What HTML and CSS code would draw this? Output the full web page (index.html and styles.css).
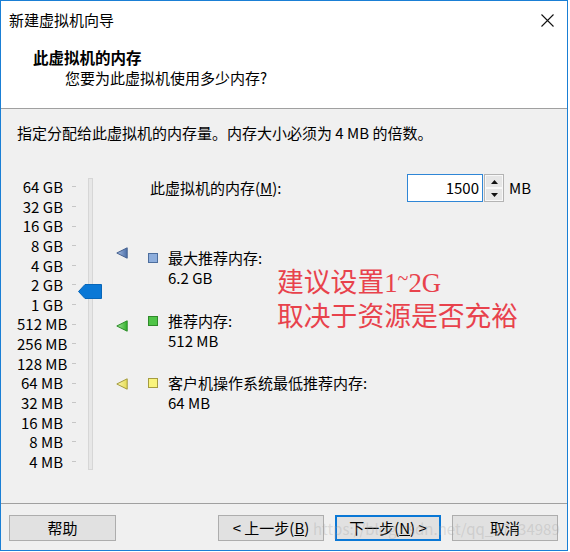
FILE: index.html
```html
<!DOCTYPE html>
<html lang="zh-CN">
<head>
<meta charset="utf-8">
<title>新建虚拟机向导</title>
<link rel="stylesheet" href="styles.css">
</head>
<body>
<div class="window">
  <div class="top">
    <div class="titlebar">
      <span class="title">新建虚拟机向导</span>
      <svg class="close" width="13" height="13" viewBox="0 0 13 13"><path d="M0.5 0.5 L12.5 12.5 M12.5 0.5 L0.5 12.5" stroke="#111" stroke-width="1.1" fill="none"/></svg>
    </div>
    <div class="header">
      <div class="h-title">此虚拟机的内存</div>
      <div class="h-sub">您要为此虚拟机使用多少内存?</div>
    </div>
  </div>
  <div class="body">
    <div class="intro">指定分配给此虚拟机的内存量。内存大小必须为 4 MB 的倍数。</div>
    <div class="main">
      <div class="scale">
        <div class="labels">
          <div class="lbl">64 GB</div><div class="lbl">32 GB</div><div class="lbl">16 GB</div><div class="lbl">8 GB</div><div class="lbl">4 GB</div><div class="lbl">2 GB</div><div class="lbl">1 GB</div><div class="lbl">512 MB</div><div class="lbl">256 MB</div><div class="lbl">128 MB</div><div class="lbl">64 MB</div><div class="lbl">32 MB</div><div class="lbl">16 MB</div><div class="lbl">8 MB</div><div class="lbl">4 MB</div>
        </div>
        <div class="ticks">
          <div class="tick"></div><div class="tick"></div><div class="tick"></div><div class="tick"></div><div class="tick"></div><div class="tick"></div><div class="tick"></div><div class="tick"></div><div class="tick"></div><div class="tick"></div><div class="tick"></div><div class="tick"></div><div class="tick"></div><div class="tick"></div><div class="tick"></div>
        </div>
        <div class="track"></div>
        <svg class="thumb" width="24" height="15" viewBox="0 0 24 15"><polygon points="0.5,7.5 7,0.5 23.5,0.5 23.5,14.5 7,14.5" fill="#0a78d6" stroke="#0866b8" stroke-width="1"/></svg>
      </div>
      <div class="content">
        <div class="mem-row">
          <span class="mem-label">此虚拟机的内存(<u>M</u>):</span>
          <div class="spin">
            <div class="spin-input">1500</div>
            <div class="spin-btns">
              <div class="spin-btn"><svg width="7" height="4" viewBox="0 0 7 4"><polygon points="3.5,0 7,4 0,4" fill="#111"/></svg></div>
              <div class="spin-btn"><svg width="7" height="4" viewBox="0 0 7 4"><polygon points="0,0 7,0 3.5,4" fill="#111"/></svg></div>
            </div>
          </div>
          <span class="unit">MB</span>
        </div>
        <div class="marker m-max">
          <svg class="tri" style="margin-top:-1px" width="12" height="12" viewBox="0 0 12 12"><defs><linearGradient id="gb" x1="0" y1="0" x2="1" y2="0"><stop offset="0" stop-color="#a9bfe3"/><stop offset="1" stop-color="#4a6ea8"/></linearGradient></defs><polygon points="0.8,6 11.2,0.8 11.2,11.2" fill="url(#gb)" stroke="#45618f" stroke-width="1"/></svg>
          <span class="sq sq-blue"></span>
          <div class="mtext"><div>最大推荐内存:</div><div>6.2 GB</div></div>
        </div>
        <div class="marker m-rec">
          <svg class="tri" style="margin-top:9px" width="12" height="12" viewBox="0 0 12 12"><defs><linearGradient id="gg" x1="0" y1="0" x2="1" y2="0"><stop offset="0" stop-color="#a6e79c"/><stop offset="1" stop-color="#2fae2a"/></linearGradient></defs><polygon points="0.8,6 11.2,0.8 11.2,11.2" fill="url(#gg)" stroke="#2c8d28" stroke-width="1"/></svg>
          <span class="sq sq-green"></span>
          <div class="mtext"><div>推荐内存:</div><div>512 MB</div></div>
        </div>
        <div class="marker m-min">
          <svg class="tri" style="margin-top:5px" width="12" height="12" viewBox="0 0 12 12"><defs><linearGradient id="gy" x1="0" y1="0" x2="1" y2="0"><stop offset="0" stop-color="#fbf7b4"/><stop offset="1" stop-color="#e6dc55"/></linearGradient></defs><polygon points="0.8,6 11.2,0.8 11.2,11.2" fill="url(#gy)" stroke="#a39a3c" stroke-width="1"/></svg>
          <span class="sq sq-yellow"></span>
          <div class="mtext"><div>客户机操作系统最低推荐内存:</div><div>64 MB</div></div>
        </div>
      </div>
    </div>
  </div>
  <div class="footer">
    <button class="btn btn-help">帮助</button>
    <div class="nav">
      <button class="btn">&lt; 上一步(<u>B</u>)</button>
      <button class="btn btn-default">下一步(<u>N</u>) &gt;</button>
      <button class="btn">取消</button>
    </div>
  </div>
  <div class="note">建议设置1<span class="tilde">~</span>2G<br>取决于资源是否充裕</div>
  <div class="watermark">https://blog.csdn.net/qq_37434989</div>
</div>
</body>
</html>
```

FILE: styles.css
```css
* { box-sizing: border-box; }
html, body { margin: 0; padding: 0; background: #ffffff; }
body {
  font-family: "Noto Sans CJK SC", "Noto Sans", sans-serif;
  font-size: 15px;
  color: #000;
}
.window {
  position: relative;
  width: 568px;
  height: 551px;
  border: 1px solid #1a7fd5;
  display: flex;
  flex-direction: column;
  background: #f0f0f0;
}
.top {
  height: 108px;
  background: #ffffff;
  border-bottom: 1px solid #a0a0a0;
  flex: none;
}
.titlebar {
  height: 38px;
  display: flex;
  align-items: center;
  padding-left: 8px;
}
.title { line-height: 20px; }
.close { margin-left: auto; margin-right: 13px; }
.header { padding-left: 32px; margin-top: 8px; }
.h-title { font-weight: bold; font-size: 15.5px; line-height: 20px; }
.h-sub { padding-left: 32px; line-height: 22px; }

.body {
  flex: 1;
  padding: 14px 0 0 16px;
  background: #f0f0f0;
}
.intro { line-height: 20px; }
.main { display: flex; margin-top: 31px; }
.scale { position: relative; display: flex; margin-top: 3px; }
.labels { width: 46px; text-align: right; }
.lbl { height: 19.64px; line-height: 19.64px; white-space: nowrap; }
.ticks { width: 5px; margin-left: 9px; }
.tick { height: 19.64px; display: flex; align-items: center; }
.tick::before { content: ""; display: block; width: 4px; height: 1px; background: #c6c6c6; }
.track {
  width: 5px;
  height: 292px;
  margin-left: 11px;
  margin-top: 1px;
  background: #e7e7e7;
  border: 1px solid #d6d6d6;
}
.thumb { position: absolute; left: 61px; top: 107px; }

.content { margin-left: 23px; }
.mem-row { display: flex; align-items: center; height: 28px; }
.mem-label { width: 291px; padding-left: 34px; line-height: 20px; white-space: nowrap; }
.spin { display: flex; height: 28px; }
.spin-input {
  width: 76px;
  height: 28px;
  background: #fff;
  border: 1px solid #2f86d6;
  text-align: right;
  padding-right: 3px;
  line-height: 26px;
}
.spin-btns {
  margin-left: 1px;
  width: 20px;
  height: 28px;
  display: flex;
  flex-direction: column;
  border: 1px solid #b4b4b4;
  background: #f4f4f4;
}
.spin-btn {
  flex: 1;
  display: flex;
  align-items: center;
  justify-content: center;
  background: #e6e6e6;
  border: 1px solid #f8f8f8;
}
.unit { margin-left: 5px; line-height: 20px; }

.marker { display: flex; align-items: flex-start; }
.m-max { margin-top: 46px; }
.m-rec { margin-top: 23px; }
.m-min { margin-top: 22px; }
.tri { flex: none; }
.sq {
  flex: none;
  width: 10px;
  height: 10px;
  margin-left: 20px;
  margin-top: 5px;
  border: 1px solid;
}
.sq-blue { background: #8eaedc; border-color: #4d6e9e; }
.sq-green { background: #4fc447; border-color: #2f8a2a; }
.sq-yellow { background: #f9f47c; border-color: #a59c3f; }
.mtext { margin-left: 10px; line-height: 20px; white-space: nowrap; }

.footer {
  flex: none;
  height: 47px;
  border-top: 1px solid #a0a0a0;
  padding: 11px 9px 0 8px;
  display: flex;
  align-items: flex-start;
  background: #f0f0f0;
}
.nav { margin-left: auto; display: flex; gap: 11px; }
.btn {
  width: 106px;
  height: 26px;
  font-family: "Noto Sans CJK SC", "Noto Sans", sans-serif;
  font-size: 15px;
  line-height: 22px;
  color: #000;
  background: #e1e1e1;
  border: 1px solid #adadad;
  padding: 0;
  margin: 0;
}
.btn-help { width: 107px; }
.btn-default { border: 2px solid #0a78d6; }

.note {
  position: absolute;
  left: 276px;
  top: 260px;
  font-family: "Liberation Serif", "Noto Sans CJK SC", serif;
  font-size: 26.8px;
  line-height: 34px;
  color: #e8424c;
  white-space: nowrap;
}
.tilde { display: inline-block; vertical-align: 0.35em; font-size: 20px; }
.watermark {
  position: absolute;
  left: 312px;
  top: 518px;
  font-size: 15px;
  line-height: 20px;
  color: rgba(160, 160, 160, 0.3);
  white-space: nowrap;
  pointer-events: none;
}
```
